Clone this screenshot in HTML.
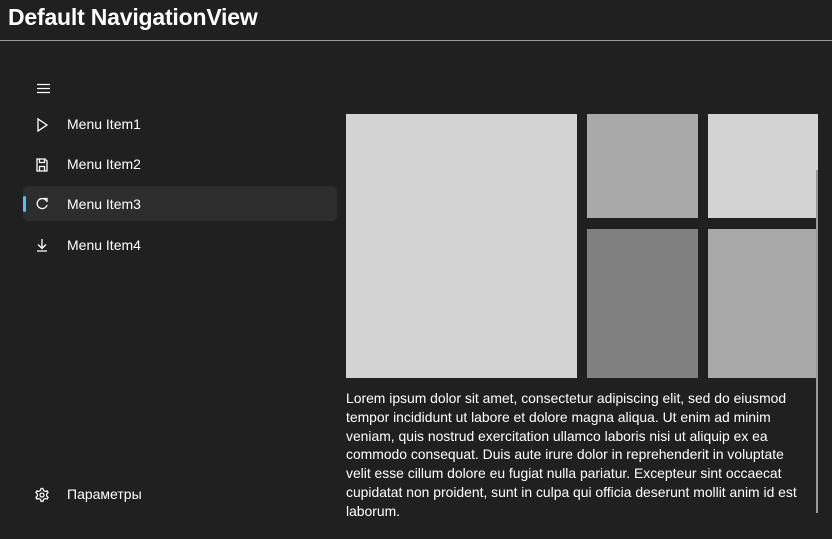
<!DOCTYPE html>
<html><head><meta charset="utf-8"><style>
*{margin:0;padding:0;box-sizing:border-box}
body{width:832px;height:539px;background:#202020;color:#fff;font-family:"Liberation Sans",sans-serif;position:relative;overflow:hidden}
.title{position:absolute;left:8px;top:4px;font-size:23px;font-weight:bold;letter-spacing:-0.2px}
.hr{position:absolute;left:0;top:40px;width:832px;height:1px;background:#9a9a9a}
.item{position:absolute;left:23px;width:314px;height:35px;font-size:14px}
.item span{position:absolute;left:44px;top:9px}
.item svg{position:absolute;left:12px;top:10px}
.sel{background:#2d2d2d;border-radius:5px}
.bar{position:absolute;left:0;top:10px;width:3px;height:16px;background:#4cc2ff;border-radius:2px}
.t{position:absolute}
.txt{position:absolute;left:346px;top:389px;font-size:13.9px;line-height:18.8px;white-space:nowrap;color:#fff}
</style></head><body>
<div class="title">Default NavigationView</div>
<div class="hr"></div>
<svg style="position:absolute;left:37px;top:83px" width="14" height="12" stroke="#fff" stroke-width="1.2"><path d="M0 1.5h13M0 5.5h13M0 9.5h13"/></svg>
<div class="item" style="top:107px"><svg width="14" height="16" fill="none" stroke="#fff" stroke-width="1.3"><path d="M3 2v12l9-6z"/></svg><span>Menu Item1</span></div>
<div class="item" style="top:147px"><svg width="14" height="16" fill="none" stroke="#fff" stroke-width="1.3"><path d="M2 2h8l2 2v10H2z M4.5 2v3.5h5V2 M4.5 14v-4.5h5V14"/></svg><span>Menu Item2</span></div>
<div class="item sel" style="top:186px"><div class="bar"></div><svg width="14" height="16" fill="none" stroke="#fff" stroke-width="1.3"><path d="M11.5 5A5 5 0 1 0 12 9"/><path d="M8.5 2.5h3.5v3.5"/></svg><span style="top:10px">Menu Item3</span></div>
<div class="item" style="top:227px"><svg width="14" height="16" fill="none" stroke="#fff" stroke-width="1.3"><path d="M7 2v9M3 7.5l4 4 4-4M2 14h10"/></svg><span style="top:10px">Menu Item4</span></div>
<div class="item" style="top:477px"><svg width="14" height="16" fill="none" stroke="#fff" stroke-width="1.2"><circle cx="7" cy="8" r="2"/><path d="M6 1.5h2l.5 2 1.6.9 2-.6 1 1.7-1.5 1.5v1.9l1.5 1.5-1 1.7-2-.6-1.6.9-.5 2H6l-.5-2-1.6-.9-2 .6-1-1.7L2.4 9V7.1L.9 5.5l1-1.7 2 .6 1.6-.9z"/></svg><span>Параметры</span></div>
<div class="t" style="left:346px;top:114px;width:231px;height:264px;background:#d3d3d3"></div>
<div class="t" style="left:587px;top:114px;width:111px;height:104px;background:#a9a9a9"></div>
<div class="t" style="left:708px;top:114px;width:110px;height:104px;background:#d3d3d3"></div>
<div class="t" style="left:587px;top:229px;width:111px;height:149px;background:#808080"></div>
<div class="t" style="left:708px;top:229px;width:110px;height:149px;background:#a9a9a9"></div>
<div class="t" style="left:816px;top:170px;width:2px;height:343px;background:#9a9a9a"></div>
<div class="txt">Lorem ipsum dolor sit amet, consectetur adipiscing elit, sed do eiusmod<br>tempor incididunt ut labore et dolore magna aliqua. Ut enim ad minim<br>veniam, quis nostrud exercitation ullamco laboris nisi ut aliquip ex ea<br>commodo consequat. Duis aute irure dolor in reprehenderit in voluptate<br>velit esse cillum dolore eu fugiat nulla pariatur. Excepteur sint occaecat<br>cupidatat non proident, sunt in culpa qui officia deserunt mollit anim id est<br>laborum.</div>
</body></html>
